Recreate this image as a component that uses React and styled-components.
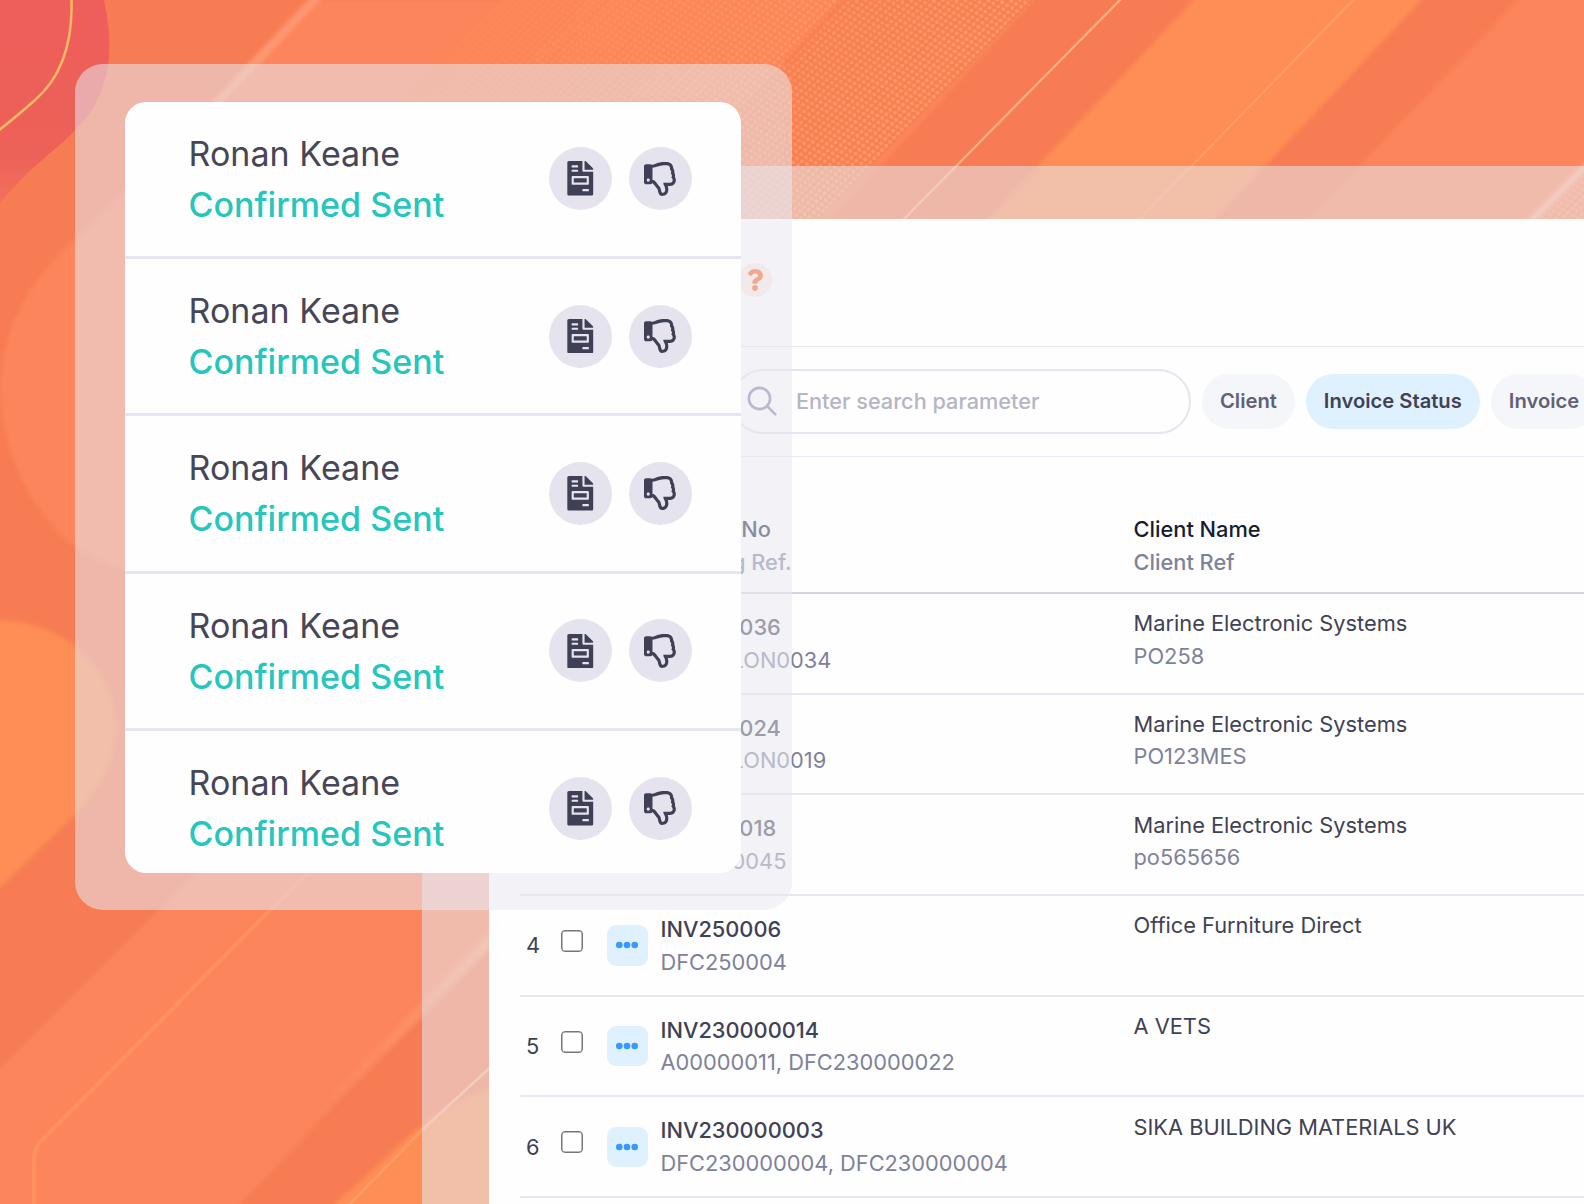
import React from 'react';
import styled, { createGlobalStyle } from 'styled-components';
import { FaFileInvoice, FaRegThumbsDown, FaQuestion } from 'react-icons/fa';

const GlobalStyle = createGlobalStyle`
    * {
        box-sizing: border-box;
    }
    body {
        margin: 0;
        font-family: Inter, 'Liberation Sans', sans-serif;
    }
    p {
        margin: 0;
    }
`;

const Stage = styled.div`
    position: relative;
    width: 1584px;
    height: 1204px;
    overflow: hidden;
    padding: 166px 0 0 422px;
    background: #f77c53;
`;

const Backdrop = styled.svg`
    position: absolute;
    inset: 0;
`;

/* translucent border around both panels */
const BackFrame = styled.div`
    position: relative;
    height: 1038px;
    padding: 53px 0 0 67px;
    background: rgba(231, 231, 238, 0.55);
`;

const Panel = styled.div`
    height: 985px;
    background: #fefefe;
    overflow: hidden;
`;

const TitleBar = styled.div`
    display: flex;
    align-items: center;
    height: 128px;
    padding: 0 0 5px 249px;
    border-bottom: 1px solid #e9e8f2;
`;

const HelpBadge = styled.div`
    display: flex;
    align-items: center;
    justify-content: center;
    width: 34px;
    height: 34px;
    border-radius: 50%;
    background: #ffeae2;
    color: #ff5c14;
`;

const Toolbar = styled.div`
    display: flex;
    align-items: center;
    gap: 11px;
    height: 110px;
    padding-left: 242px;
    border-bottom: 1px solid #ebeaf4;
`;

const SearchBox = styled.div`
    display: flex;
    align-items: center;
    gap: 19px;
    flex: none;
    width: 460px;
    height: 65px;
    padding: 0 0 1px 14px;
    border: 2px solid #e6e5ef;
    border-radius: 33px;
    color: #b5b5c3;
    font-size: 21.7px;
    font-weight: 500;
`;

const Chip = styled.div`
    flex: none;
    height: 55px;
    padding: 0 18px;
    border-radius: 28px;
    line-height: 54px;
    font-size: 20.2px;
    font-weight: 600;
    white-space: nowrap;
    color: ${({ $active }) => ($active ? '#3f4254' : '#5e6278')};
    background: ${({ $active }) => ($active ? '#dff1ff' : '#f5f6fa')};
`;

const TableRow = styled.div`
    display: grid;
    grid-template-columns: 41px 46px 53.5px 473px 1fr;
    align-items: center;
    height: 100.7px;
    margin-left: 31px;
    border-bottom: 2px solid #e8e7f1;
`;

const TableHead = styled(TableRow)`
    height: 137px;
    align-items: end;
    padding-bottom: 14px;
    border-bottom-color: #d5d4e3;
`;

const RowNumber = styled.p`
    padding-left: 6px;
    font-size: 21.8px;
    color: #3f4254;
`;

const Checkbox = styled.div`
    width: 22px;
    height: 22px;
    margin-bottom: 9px;
    border: 1.6px solid #767676;
    box-shadow: inset 0 0 0 0.5px #767676;
    border-radius: 4px;
    background: #fff;
`;

const MenuButton = styled.div`
    display: flex;
    align-items: center;
    justify-content: center;
    width: 40.5px;
    height: 40.5px;
    border-radius: 9px;
    background: #dff1ff;
`;

const Cell = styled.div`
    align-self: start;
    padding-top: ${({ $top }) => $top}px;
    font-size: 21.8px;
    line-height: 32.5px;
    white-space: nowrap;
`;

const HeadCell = styled(Cell)`
    grid-column: ${({ $col }) => $col};
    align-self: end;
`;

const HeadText = styled.p`
    font-weight: 500;
    color: ${({ $muted }) => ($muted ? '#7e8299' : '#181c32')};
`;

const MainText = styled.p`
    font-weight: ${({ $medium }) => ($medium ? 500 : 400)};
    color: #3f4254;
`;

const SubText = styled.p`
    color: #7e8299;
`;

const FloatingFrame = styled.div`
    position: absolute;
    left: 75px;
    top: 64px;
    width: 717px;
    height: 846px;
    padding: 37.5px 51px 0 50px;
    border-radius: 28px;
    background: rgba(231, 231, 240, 0.55);
`;

const StatusCard = styled.div`
    height: 771px;
    border-radius: 21px;
    background: #fefefe;
    overflow: hidden;
`;

const StatusRow = styled.div`
    display: flex;
    align-items: center;
    justify-content: space-between;
    height: 157.4px;
    padding: 0 49px 0 63.5px;
    border-bottom: 3px solid #e6e5f0;
`;

const StatusText = styled.div`
    font-size: 34px;
    line-height: 51px;
    letter-spacing: 0.04px;
`;

const PersonName = styled.p`
    color: #464659;
`;

const Status = styled.p`
    font-weight: 500;
    color: #24c6bd;
`;

const Actions = styled.div`
    display: flex;
    gap: 17px;
`;

const RoundButton = styled.div`
    display: flex;
    align-items: center;
    justify-content: center;
    width: 63px;
    height: 63px;
    border-radius: 50%;
    background: #e5e4ee;
    color: #3f4055;
`;

const invoices = [
    { no: 'INV250036', ref: 'DFC25LON0034', client: 'Marine Electronic Systems', clientRef: 'PO258' },
    { no: 'INV250024', ref: 'DFC25LON0019', client: 'Marine Electronic Systems', clientRef: 'PO123MES' },
    { no: 'INV250018', ref: 'DFC250045', client: 'Marine Electronic Systems', clientRef: 'po565656' },
    { no: 'INV250006', ref: 'DFC250004', client: 'Office Furniture Direct' },
    { no: 'INV230000014', ref: 'A00000011, DFC230000022', client: 'A VETS' },
    { no: 'INV230000003', ref: 'DFC230000004, DFC230000004', client: 'SIKA BUILDING MATERIALS UK' },
];

const statuses = [1, 2, 3, 4, 5];

const SearchIcon = () => (
    <svg width="30" height="30" viewBox="0 0 30 30" fill="none" stroke="#80849f" strokeWidth="2.6">
        <circle cx="12.5" cy="12.5" r="10.6" />
        <path d="M20 20l8.3 8.3" strokeLinecap="round" />
    </svg>
);

const DotsIcon = () => (
    <svg width="24" height="8" viewBox="0 0 24 8" fill="#3699ff">
        <circle cx="4.3" cy="4" r="3.3" />
        <circle cx="12" cy="4" r="3.3" />
        <circle cx="19.7" cy="4" r="3.3" />
    </svg>
);

const Background = () => (
    <Backdrop width="1584" height="1204" viewBox="0 0 1584 1204" fill="none">
        <defs>
            <pattern id="mesh" width="9" height="7" patternUnits="userSpaceOnUse" patternTransform="rotate(-8)">
                <circle cx="2.2" cy="1.8" r="1.9" fill="#ffa574" />
                <circle cx="6.7" cy="5.3" r="1.9" fill="#ffa574" />
            </pattern>
            <linearGradient id="meshFade" gradientUnits="userSpaceOnUse" x1="480" y1="0" x2="780" y2="250">
                <stop offset="0" stopColor="#fff" stopOpacity="0.05" />
                <stop offset="1" stopColor="#fff" stopOpacity="0.7" />
            </linearGradient>
            <mask id="meshMask">
                <path d="M500 0H1034L800 240H264z" fill="url(#meshFade)" />
            </mask>
            <linearGradient id="streak" gradientUnits="userSpaceOnUse" x1="489" y1="939" x2="310" y2="1120">
                <stop offset="0" stopColor="#ff9d76" />
                <stop offset="1" stopColor="#ff8f62" stopOpacity="0" />
            </linearGradient>
            <linearGradient id="rose" x1="0" y1="0" x2="0" y2="1">
                <stop offset="0" stopColor="#ef5e5b" />
                <stop offset="0.75" stopColor="#ec6158" />
                <stop offset="1" stopColor="#f3705a" />
            </linearGradient>
            <filter id="soft">
                <feGaussianBlur stdDeviation="2" />
            </filter>
        </defs>

        <path
            d="M318 0L74 239C20 290 0 340 1 393C2 450 30 510 74 546C100 565 125 572 180 580H500L1034 0z"
            fill="#fc855b"
            filter="url(#soft)"
        />
        <path d="M500 0H850L610 240H264z" fill="#fd8658" />
        <path d="M850 0H1034L800 240H610z" fill="#f97f51" />
        <path d="M500 0H1034L800 240H264z" fill="url(#mesh)" mask="url(#meshMask)" />
        <path d="M318 -4L214 106" stroke="#ffa07a" strokeWidth="9" opacity="0.75" filter="url(#soft)" />
        <path d="M848 -4L784 64" stroke="#f4764b" strokeWidth="3" filter="url(#soft)" />

        <path d="M1202 -9H1430L1205 230H978z" fill="#fe8e54" filter="url(#soft)" />
        <path d="M1527 -9H1594V230H1298z" fill="#fc855b" filter="url(#soft)" />
        <path d="M1122 -2L900 223" stroke="#ffae82" strokeWidth="2.2" />
        <path d="M1355 -2L1140 219" stroke="#ff9b66" strokeWidth="2.5" />
        <path d="M1590 162L1526 226" stroke="#ffb798" strokeWidth="5" filter="url(#soft)" />
        <path d="M1584 172L1536 220H1584z" fill="url(#mesh)" opacity="0.6" />

        <path
            d="M0 0H104C112 38 113 75 93 108C72 142 36 158 0 203z"
            fill="url(#rose)"
        />
        <path d="M71.5 0C73 52 56 82 35 100C24 110 12 120 -2 131" stroke="#f9b863" strokeWidth="2.5" />

        <path
            d="M-9 621C45 616 116 655 116 727C116 764 98 792 74 816L-9 896z"
            fill="#fe8e54"
            filter="url(#soft)"
        />
        <path d="M-9 1077L208 860H570L230 1214H-9z" fill="#fc855b" filter="url(#soft)" />
        <path d="M318 862L42 1140Q34 1148 34 1160V1206" stroke="#ff9160" strokeWidth="4" />
        <path d="M500 931L310 1122" stroke="url(#streak)" strokeWidth="11" filter="url(#soft)" />
        <path d="M326 1212L408 1137Q450 1098 500 1085V1212z" fill="#fe8e54" filter="url(#soft)" />
        <path d="M495 1063L422 1130" stroke="#ffae82" strokeWidth="2.5" />
        <path d="M422 1130L348 1206" stroke="#ff9b66" strokeWidth="3" />
    </Backdrop>
);

const App = () => {
    return (
        <Stage>
            <GlobalStyle />
            <Background />
            <BackFrame>
                <Panel>
                    <TitleBar>
                        <HelpBadge>
                            <FaQuestion size={22} />
                        </HelpBadge>
                    </TitleBar>
                    <Toolbar>
                        <SearchBox>
                            <SearchIcon />
                            Enter search parameter
                        </SearchBox>
                        <Chip>Client</Chip>
                        <Chip $active>Invoice Status</Chip>
                        <Chip>Invoice</Chip>
                    </Toolbar>
                    <TableHead>
                        <HeadCell $col={4} $top={0}>
                            <HeadText>Invoice No</HeadText>
                            <HeadText $muted>Booking Ref.</HeadText>
                        </HeadCell>
                        <HeadCell $col={5} $top={0}>
                            <HeadText>Client Name</HeadText>
                            <HeadText $muted>Client Ref</HeadText>
                        </HeadCell>
                    </TableHead>
                    {invoices.map((invoice, index) => (
                        <TableRow key={invoice.no}>
                            <RowNumber>{index + 1}</RowNumber>
                            <Checkbox />
                            <MenuButton>
                                <DotsIcon />
                            </MenuButton>
                            <Cell $top={17}>
                                <MainText $medium>{invoice.no}</MainText>
                                <SubText>{invoice.ref}</SubText>
                            </Cell>
                            <Cell $top={13.2}>
                                <MainText>{invoice.client}</MainText>
                                <SubText>{invoice.clientRef}</SubText>
                            </Cell>
                        </TableRow>
                    ))}
                </Panel>
            </BackFrame>
            <FloatingFrame>
                <StatusCard>
                    {statuses.map((id) => (
                        <StatusRow key={id}>
                            <StatusText>
                                <PersonName>Ronan Keane</PersonName>
                                <Status>Confirmed Sent</Status>
                            </StatusText>
                            <Actions>
                                <RoundButton>
                                    <FaFileInvoice size={34.5} />
                                </RoundButton>
                                <RoundButton>
                                    <FaRegThumbsDown size={34} />
                                </RoundButton>
                            </Actions>
                        </StatusRow>
                    ))}
                </StatusCard>
            </FloatingFrame>
        </Stage>
    );
};

export default App;
